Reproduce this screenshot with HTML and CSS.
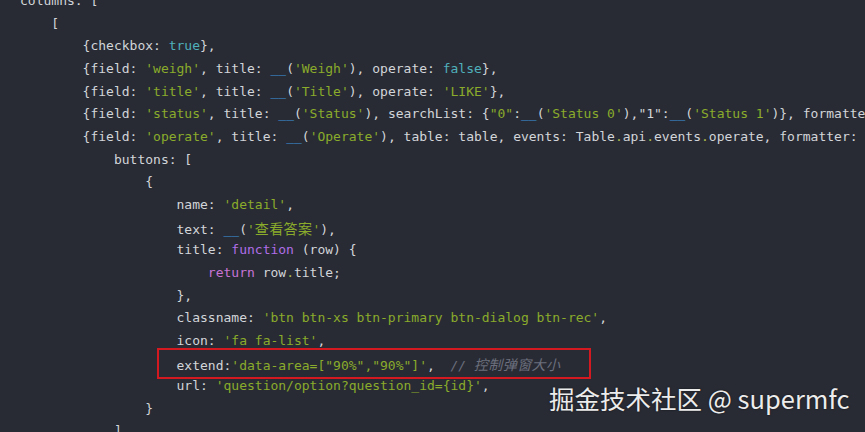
FILE: index.html
```html
<!DOCTYPE html>
<html>
<head>
<meta charset="utf-8">
<link rel="stylesheet" href="styles.css">
</head>
<body>
<div class="editor">
<pre class="code"><div class="ln">columns: [</div><div class="ln">    [</div><div class="ln">        {checkbox: <span class="k">true</span>},</div><div class="ln">        {field: <span class="s">'weigh'</span>, title: <span class="u">__</span>(<span class="s">'Weigh'</span>), operate: <span class="k">false</span>},</div><div class="ln">        {field: <span class="s">'title'</span>, title: <span class="u">__</span>(<span class="s">'Title'</span>), operate: <span class="s">'LIKE'</span>},</div><div class="ln">        {field: <span class="s">'status'</span>, title: <span class="u">__</span>(<span class="s">'Status'</span>), searchList: {<span class="s">"0"</span>:<span class="u">__</span>(<span class="s">'Status 0'</span>),"1":<span class="u">__</span>(<span class="s">'Status 1'</span>)}, formatter: Table<span class="d">.</span>api<span class="d">.</span>formatter<span class="d">.</span>status},</div><div class="ln">        {field: <span class="s">'operate'</span>, title: <span class="u">__</span>(<span class="s">'Operate'</span>), table: table, events: Table<span class="d">.</span>api<span class="d">.</span>events<span class="d">.</span>operate, formatter: Table<span class="d">.</span>api<span class="d">.</span>formatter<span class="d">.</span>operate,</div><div class="ln">            buttons: [</div><div class="ln">                {</div><div class="ln">                    name: <span class="s">'detail'</span>,</div><div class="ln">                    text: <span class="u">__</span>(<span class="s">'<span class="cjk">查看答案</span>'</span>),</div><div class="ln">                    title: <span class="f">function</span> (row) {</div><div class="ln">                        <span class="r">return</span> row<span class="d">.</span>title;</div><div class="ln">                    },</div><div class="ln">                    classname: <span class="s">'btn btn-xs btn-primary btn-dialog btn-rec'</span>,</div><div class="ln">                    icon: <span class="s">'fa fa-list'</span>,</div><div class="ln">                    extend:<span class="s">'data-area=["90%","90%"]'</span>,  <span class="c">// <span class="cjk">控制弹窗大小</span></span></div><div class="ln">                    url: <span class="s">'question/option?question_id={id}'</span>,</div><div class="ln">                }</div><div class="ln">            ]</div></pre>
<div class="mark"></div>
<div class="wm">掘金技术社区 @ supermfc</div>
</div>
</body>
</html>
```
FILE: styles.css
```css
html, body {
  margin: 0;
  padding: 0;
  background: #292b34;
}
.editor {
  position: relative;
  width: 865px;
  height: 432px;
  overflow: hidden;
  background: #292b34;
}
.code {
  margin: -10px 0 0 0;
  padding: 0 0 0 20px;
  font-family: "DejaVu Sans Mono", "Liberation Mono", monospace;
  font-size: 13px;
  line-height: 22.67px;
  color: #d2d5d9;
  white-space: pre;
}
.ln {
  height: 22.67px;
}
.s { color: #8aab2b; }
.k { color: #4fb0bb; }
.u { color: #3d97dc; }
.d { color: #a8b84a; }
.f { color: #b06ee8; }
.r { color: #c773d6; }
.c { color: #6b6f7d; font-style: italic; }
.cjk {
  font-family: "Noto Sans CJK SC", sans-serif;
  font-size: 14px;
  letter-spacing: 0.4px;
}
.mark {
  position: absolute;
  left: 157px;
  top: 348px;
  width: 430px;
  height: 27px;
  border: 2px solid #d51920;
}
.wm {
  position: absolute;
  left: 549px;
  top: 380px;
  font-family: "Noto Sans CJK SC", "Noto Sans", sans-serif;
  font-size: 25.5px;
  line-height: 36px;
  color: #ececec;
  text-shadow: 0 0 2px rgba(0,0,0,0.6);
  white-space: nowrap;
}
```
